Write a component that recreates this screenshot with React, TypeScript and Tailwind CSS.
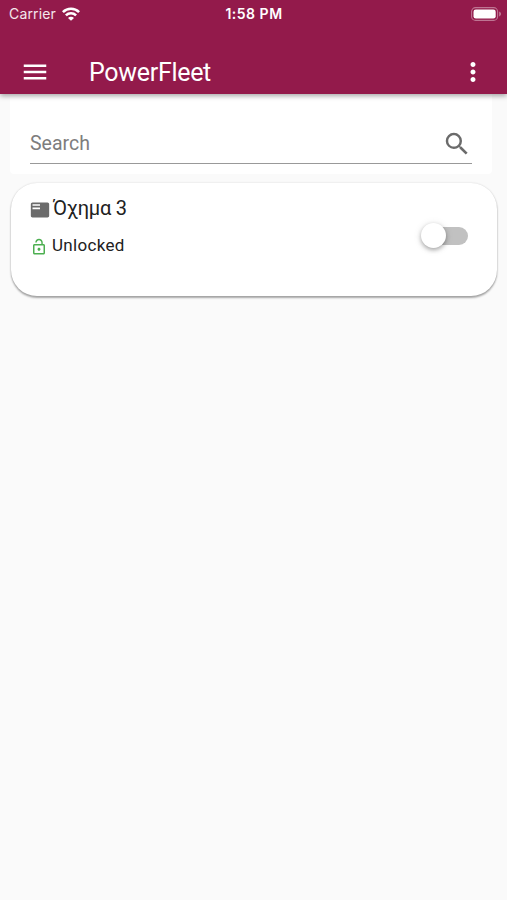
import React from 'react';
import { MdFeaturedPlayList, MdLockOpen, MdMenu, MdMoreVert, MdSearch } from 'react-icons/md';

const vehicles = [{ id: 3, name: 'Όχημα 3', status: 'Unlocked', enabled: false }];

const WifiIcon: React.FC = () => (
  <svg width="18" height="14" viewBox="0 0 18 14" fill="none" stroke="white" strokeWidth="2.6">
    <path d="M.9 5.1C5.4.6 12.6.6 17.1 5.1" />
    <path d="M3.9 8.4c2.9-2.8 7.3-2.8 10.2 0" />
    <path d="M9 13.8 6 10.9c1.6-1.6 4.4-1.6 6 0z" fill="white" stroke="none" />
  </svg>
);

const BatteryIcon: React.FC = () => (
  <svg width="31" height="14" viewBox="0 0 31 14">
    <rect x=".6" y=".6" width="26" height="12.8" rx="4" fill="none" stroke="white" strokeOpacity=".4" strokeWidth="1.1" />
    <rect x="2.5" y="2.5" width="22.2" height="9" rx="2.3" fill="white" />
    <path d="M28.2 4.6c2.3.8 2.3 4 0 4.8z" fill="white" fillOpacity=".45" />
  </svg>
);

const StatusBar: React.FC = () => (
  <div className="grid h-[27px] grid-cols-3 items-center pl-[9px] pr-[5px] font-[Inter,sans-serif]">
    <div className="flex items-center gap-[6px]">
      <span className="w-[47px] pt-px text-[14px] leading-5 tracking-[0.15px] text-white/90">Carrier</span>
      <WifiIcon />
    </div>
    <span className="-ml-[3px] pt-px text-center text-[14px] leading-5 font-semibold tracking-[0.5px]">1:58 PM</span>
    <div className="flex justify-end">
      <BatteryIcon />
    </div>
  </div>
);

const Toggle: React.FC<{ on: boolean }> = ({ on }) => (
  <button role="switch" aria-checked={on} className="relative mr-[9px] h-[18px] w-[44px] rounded-full bg-[#c1c1c1]">
    <span className="absolute -left-[3px] -top-1 size-[25px] rounded-full bg-white shadow-[0_2px_4px_rgba(0,0,0,0.3),0_1px_8px_rgba(0,0,0,0.1)]" />
  </button>
);

export default function App() {
  return (
    <div className="min-h-screen bg-[#fafafa] font-[Roboto,sans-serif] text-[#212121]">
      <header className="relative z-10 h-[94px] bg-[#931a4b] text-white shadow-[0_2px_5px_rgba(0,0,0,0.35)]">
        <StatusBar />
        <div className="flex h-[67px] items-center pl-5 pr-[19px] pt-[23px]">
          <button aria-label="Menu">
            <MdMenu size={30} />
          </button>
          <h1 className="ml-[38px] flex-1 pl-px pt-[2px] text-[25px] leading-[30px] tracking-[-0.3px]">PowerFleet</h1>
          <button aria-label="More">
            <MdMoreVert size={30} />
          </button>
        </div>
      </header>

      {/* Search */}
      <div className="ml-2.5 mr-[15px] h-20 rounded-b bg-white px-5 pt-[30px]">
        <div className="flex h-[40px] items-center border-b border-[#999999]">
          <input
            placeholder="Search"
            className="min-w-0 flex-1 bg-transparent text-[19.5px] outline-none placeholder:text-[#7d7d7d]"
          />
          <MdSearch size={30} className="text-[#6b6b6b]" />
        </div>
      </div>

      {/* Vehicles */}
      <main className="ml-[11px] mr-2.5 mt-[9px]">
        {vehicles.map((vehicle) => (
          <div
            key={vehicle.id}
            className="flex h-[113px] justify-between rounded-[26px] bg-white pl-[19px] pr-5 pt-[11px] shadow-[0_2px_2px_rgba(0,0,0,0.32),0_0_2px_rgba(0,0,0,0.16)]"
          >
            <div>
              <div className="flex h-[27px] items-center gap-[3px]">
                <MdFeaturedPlayList size={20} className="mt-[4px] text-[#6b6b6b]" />
                <span className="text-[20px] tracking-[-0.2px]">{vehicle.name}</span>
              </div>
              <div className="mt-[11px] flex h-[27px] items-center gap-1">
                <MdLockOpen size={18} className="mt-[2px] text-[#4caf50]" />
                <span className="text-[17px] tracking-[0.3px]">{vehicle.status}</span>
              </div>
            </div>
            <div className="pt-[33px]">
              <Toggle on={vehicle.enabled} />
            </div>
          </div>
        ))}
      </main>
    </div>
  );
}
